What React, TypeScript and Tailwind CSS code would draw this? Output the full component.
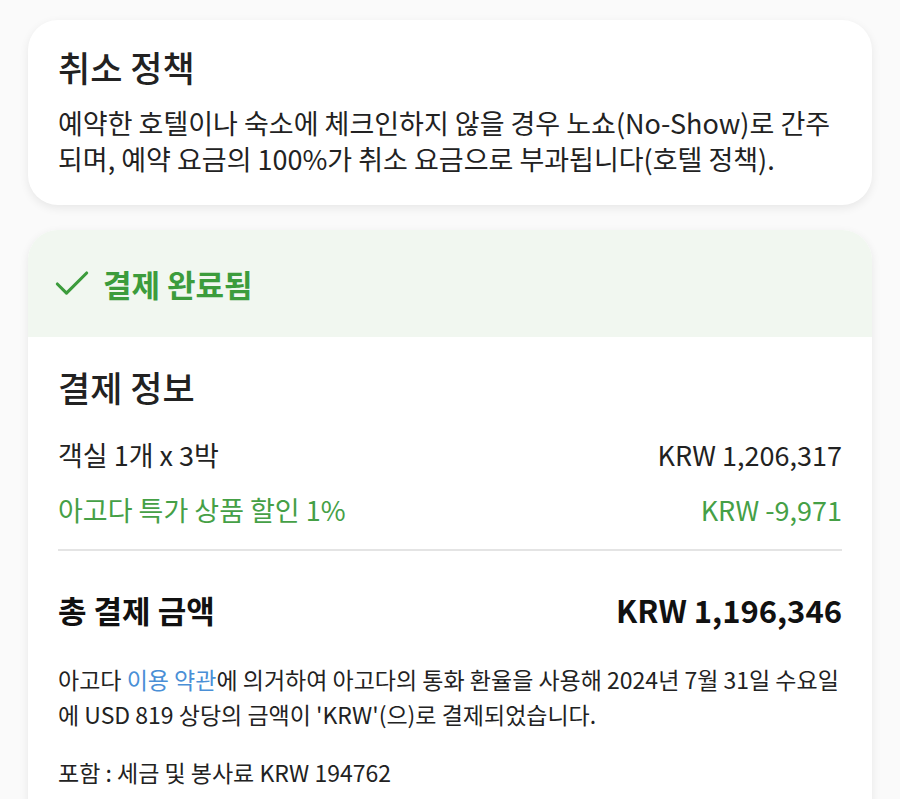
import { Check } from 'lucide-react';

const font = { fontFamily: '"Noto Sans CJK KR", "Noto Sans", sans-serif' };

function Row({ label, value, green }: { label: string; value: string; green?: boolean }) {
  return (
    <div
      className={`flex items-center justify-between text-[27px] leading-[36px] ${
        green ? 'text-[#45a046]' : 'text-[#222]'
      }`}
    >
      <span>{label}</span>
      <span>{value}</span>
    </div>
  );
}

export default function App() {
  return (
    <div className="min-h-[799px] bg-[#fafafa] px-[28px] pt-[20px]" style={font}>
      {/* Cancellation policy */}
      <div className="rounded-[30px] bg-white px-[30px] pt-[27px] pb-[28px] shadow-[0_3px_10px_rgba(0,0,0,0.08)]">
        <h2 className="text-[35px] font-medium leading-[40px] text-[#222]">취소 정책</h2>
        <p className="mt-[18px] text-[27px] leading-[36px] text-[#222]">
          예약한 호텔이나 숙소에 체크인하지 않을 경우 노쇼(No-Show)로 간주
          <br />
          되며, 예약 요금의 100%가 취소 요금으로 부과됩니다(호텔 정책).
        </p>
      </div>

      {/* Payment */}
      <div className="mt-[25px] overflow-hidden rounded-t-[30px] bg-white shadow-[0_3px_10px_rgba(0,0,0,0.08)]">
        <div className="flex h-[107px] items-center gap-[9px] bg-[#f1f7f0] px-[22px]">
          <Check className="h-[44px] w-[44px] text-[#3c9c3c]" strokeWidth={1.7} />
          <span className="text-[31px] font-bold leading-[40px] text-[#3c9c3c]">결제 완료됨</span>
        </div>

        <div className="px-[30px] pt-[30px] pb-[30px]">
          <h2 className="text-[35px] font-medium leading-[40px] text-[#222]">결제 정보</h2>

          <div className="mt-[30px] flex flex-col gap-[19px]">
            <Row label="객실 1개 x 3박" value="KRW 1,206,317" />
            <Row label="아고다 특가 상품 할인 1%" value="KRW -9,971" green />
          </div>

          <div className="mt-[21px] h-[2px] bg-[#e4e4e4]" />

          <div className="mt-[39px] flex items-center justify-between text-[31px] font-bold leading-[40px] text-[#111]">
            <span>총 결제 금액</span>
            <span>KRW 1,196,346</span>
          </div>

          <p className="mt-[32px] text-[23px] leading-[35px] text-[#222]">
            아고다 <span className="text-[#4a8fd6]">이용 약관</span>에 의거하여 아고다의 통화 환율을 사용해 2024년 7월 31일 수요일
            <br />
            에 USD 819 상당의 금액이 'KRW'(으)로 결제되었습니다.
          </p>

          <p className="mt-[23px] text-[23px] leading-[35px] text-[#222]">포함 : 세금 및 봉사료 KRW 194762</p>
        </div>
      </div>
    </div>
  );
}
